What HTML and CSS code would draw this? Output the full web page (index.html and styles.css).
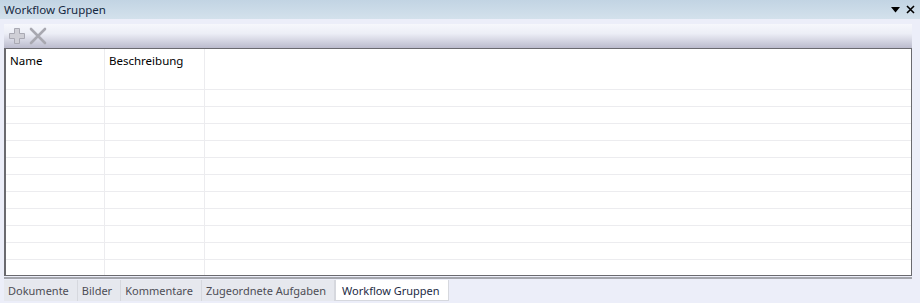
FILE: index.html
```html
<!DOCTYPE html>
<html lang="de">
<head>
    <meta charset="UTF-8">
    <title>Workflow Gruppen</title>
    <link rel="stylesheet" href="styles.css">
</head>
<body>
    <div class="window">
        <div class="titlebar">
            <span class="title">Workflow Gruppen</span>
            <span class="buttons">
                <svg width="9" height="6" viewBox="0 0 9 6"><polygon points="0,0 9,0 4.5,5.5" fill="#000"/></svg>
                <svg width="9" height="9" viewBox="0 0 9 9"><path d="M1 1 L8 8 M8 1 L1 8" stroke="#000" stroke-width="1.6"/></svg>
            </span>
        </div>
        <div class="content">
            <div class="panel">
                <div class="toolbar">
                    <svg class="tool" width="18" height="18" viewBox="0 0 18 18">
                        <path d="M6.5 1.5h5v5h5v5h-5v5h-5v-5h-5v-5h5z" fill="#cfcfd6" stroke="#a9a9b3" stroke-width="1"/>
                    </svg>
                    <svg class="tool" width="18" height="18" viewBox="0 0 18 18">
                        <path d="M2 2 L16 16 M16 2 L2 16" stroke="#a8a8b0" stroke-width="2.6" stroke-linecap="round"/>
                    </svg>
                </div>
                <div class="grid">
                    <div class="row head">
                        <div class="cell c1">Name</div>
                        <div class="cell c2">Beschreibung</div>
                        <div class="cell c3"></div>
                    </div>
                    <div class="row"><div class="cell c1"></div><div class="cell c2"></div><div class="cell c3"></div></div>
                    <div class="row"><div class="cell c1"></div><div class="cell c2"></div><div class="cell c3"></div></div>
                    <div class="row"><div class="cell c1"></div><div class="cell c2"></div><div class="cell c3"></div></div>
                    <div class="row"><div class="cell c1"></div><div class="cell c2"></div><div class="cell c3"></div></div>
                    <div class="row"><div class="cell c1"></div><div class="cell c2"></div><div class="cell c3"></div></div>
                    <div class="row"><div class="cell c1"></div><div class="cell c2"></div><div class="cell c3"></div></div>
                    <div class="row"><div class="cell c1"></div><div class="cell c2"></div><div class="cell c3"></div></div>
                    <div class="row"><div class="cell c1"></div><div class="cell c2"></div><div class="cell c3"></div></div>
                    <div class="row"><div class="cell c1"></div><div class="cell c2"></div><div class="cell c3"></div></div>
                    <div class="row"><div class="cell c1"></div><div class="cell c2"></div><div class="cell c3"></div></div>
                    <div class="row"><div class="cell c1"></div><div class="cell c2"></div><div class="cell c3"></div></div>
                    <div class="row last"><div class="cell c1"></div><div class="cell c2"></div><div class="cell c3"></div></div>
                </div>
            </div>
            <div class="tabs">
                <div class="tab">Dokumente</div>
                <div class="tab">Bilder</div>
                <div class="tab">Kommentare</div>
                <div class="tab">Zugeordnete Aufgaben</div>
                <div class="tab active">Workflow Gruppen</div>
            </div>
        </div>
    </div>
</body>
</html>
```

FILE: styles.css
```css
body {
    margin: 0;
    font-family: "Noto Sans", "Open Sans", sans-serif;
    font-size: 11.5px;
    background-color: #eceef9;
    width: 920px;
    height: 303px;
    overflow: hidden;
}

.window {
    display: flex;
    flex-direction: column;
    height: 303px;
}

.titlebar {
    height: 19px;
    background: linear-gradient(#c2d4e3, #d3e1ec);
    display: flex;
    align-items: center;
    justify-content: space-between;
    padding: 0 5px 0 4px;
    color: #15283f;
}

.title {
    font-size: 11.5px;
    line-height: 19px;
}

.buttons {
    display: flex;
    align-items: center;
    gap: 6px;
}

.content {
    flex: 1;
    padding: 5px 8px 0 4px;
    display: flex;
    flex-direction: column;
}

.panel {
    display: flex;
    flex-direction: column;
    border-bottom: 2px solid #a4a6ad;
    padding-bottom: 1px;
}

.toolbar {
    height: 24px;
    background: linear-gradient(#f6f7fc, #eceef6 40%, #bbbbcd);
    display: flex;
    align-items: center;
    padding-left: 4px;
    gap: 3px;
}

.grid {
    background-color: #fff;
    border: 1px solid #6a6a6f;
    border-left-width: 2px;
    border-right-width: 1px;
    height: 226px;
    overflow: hidden;
}

.row {
    display: flex;
    height: 17px;
    border-bottom: 1px solid #ececef;
    box-sizing: border-box;
}

.row.head {
    height: 24px;
    border-bottom: none;
}

.row.last {
    border-bottom: none;
}

.cell {
    border-right: 1px solid #ececef;
    box-sizing: border-box;
}

.c1 {
    width: 99px;
}

.c2 {
    width: 100px;
}

.c3 {
    flex: 1;
    border-right: none;
}

.head .cell {
    color: #000;
    padding: 4px 0 0 4px;
    font-size: 11.5px;
}

.tabs {
    display: flex;
    padding-top: 1px;
    height: 21px;
}

.tab {
    background-color: #e6e8ee;
    color: #4d4d55;
    padding: 3px 8px 0 4px;
    border-right: 1px solid #d6d8de;
    font-size: 11px;
}

.tab.active {
    background-color: #fff;
    color: #1c2a44;
    border: 1px solid #d6d8de;
    border-top: none;
    padding: 3px 8px 0 6px;
}
```
